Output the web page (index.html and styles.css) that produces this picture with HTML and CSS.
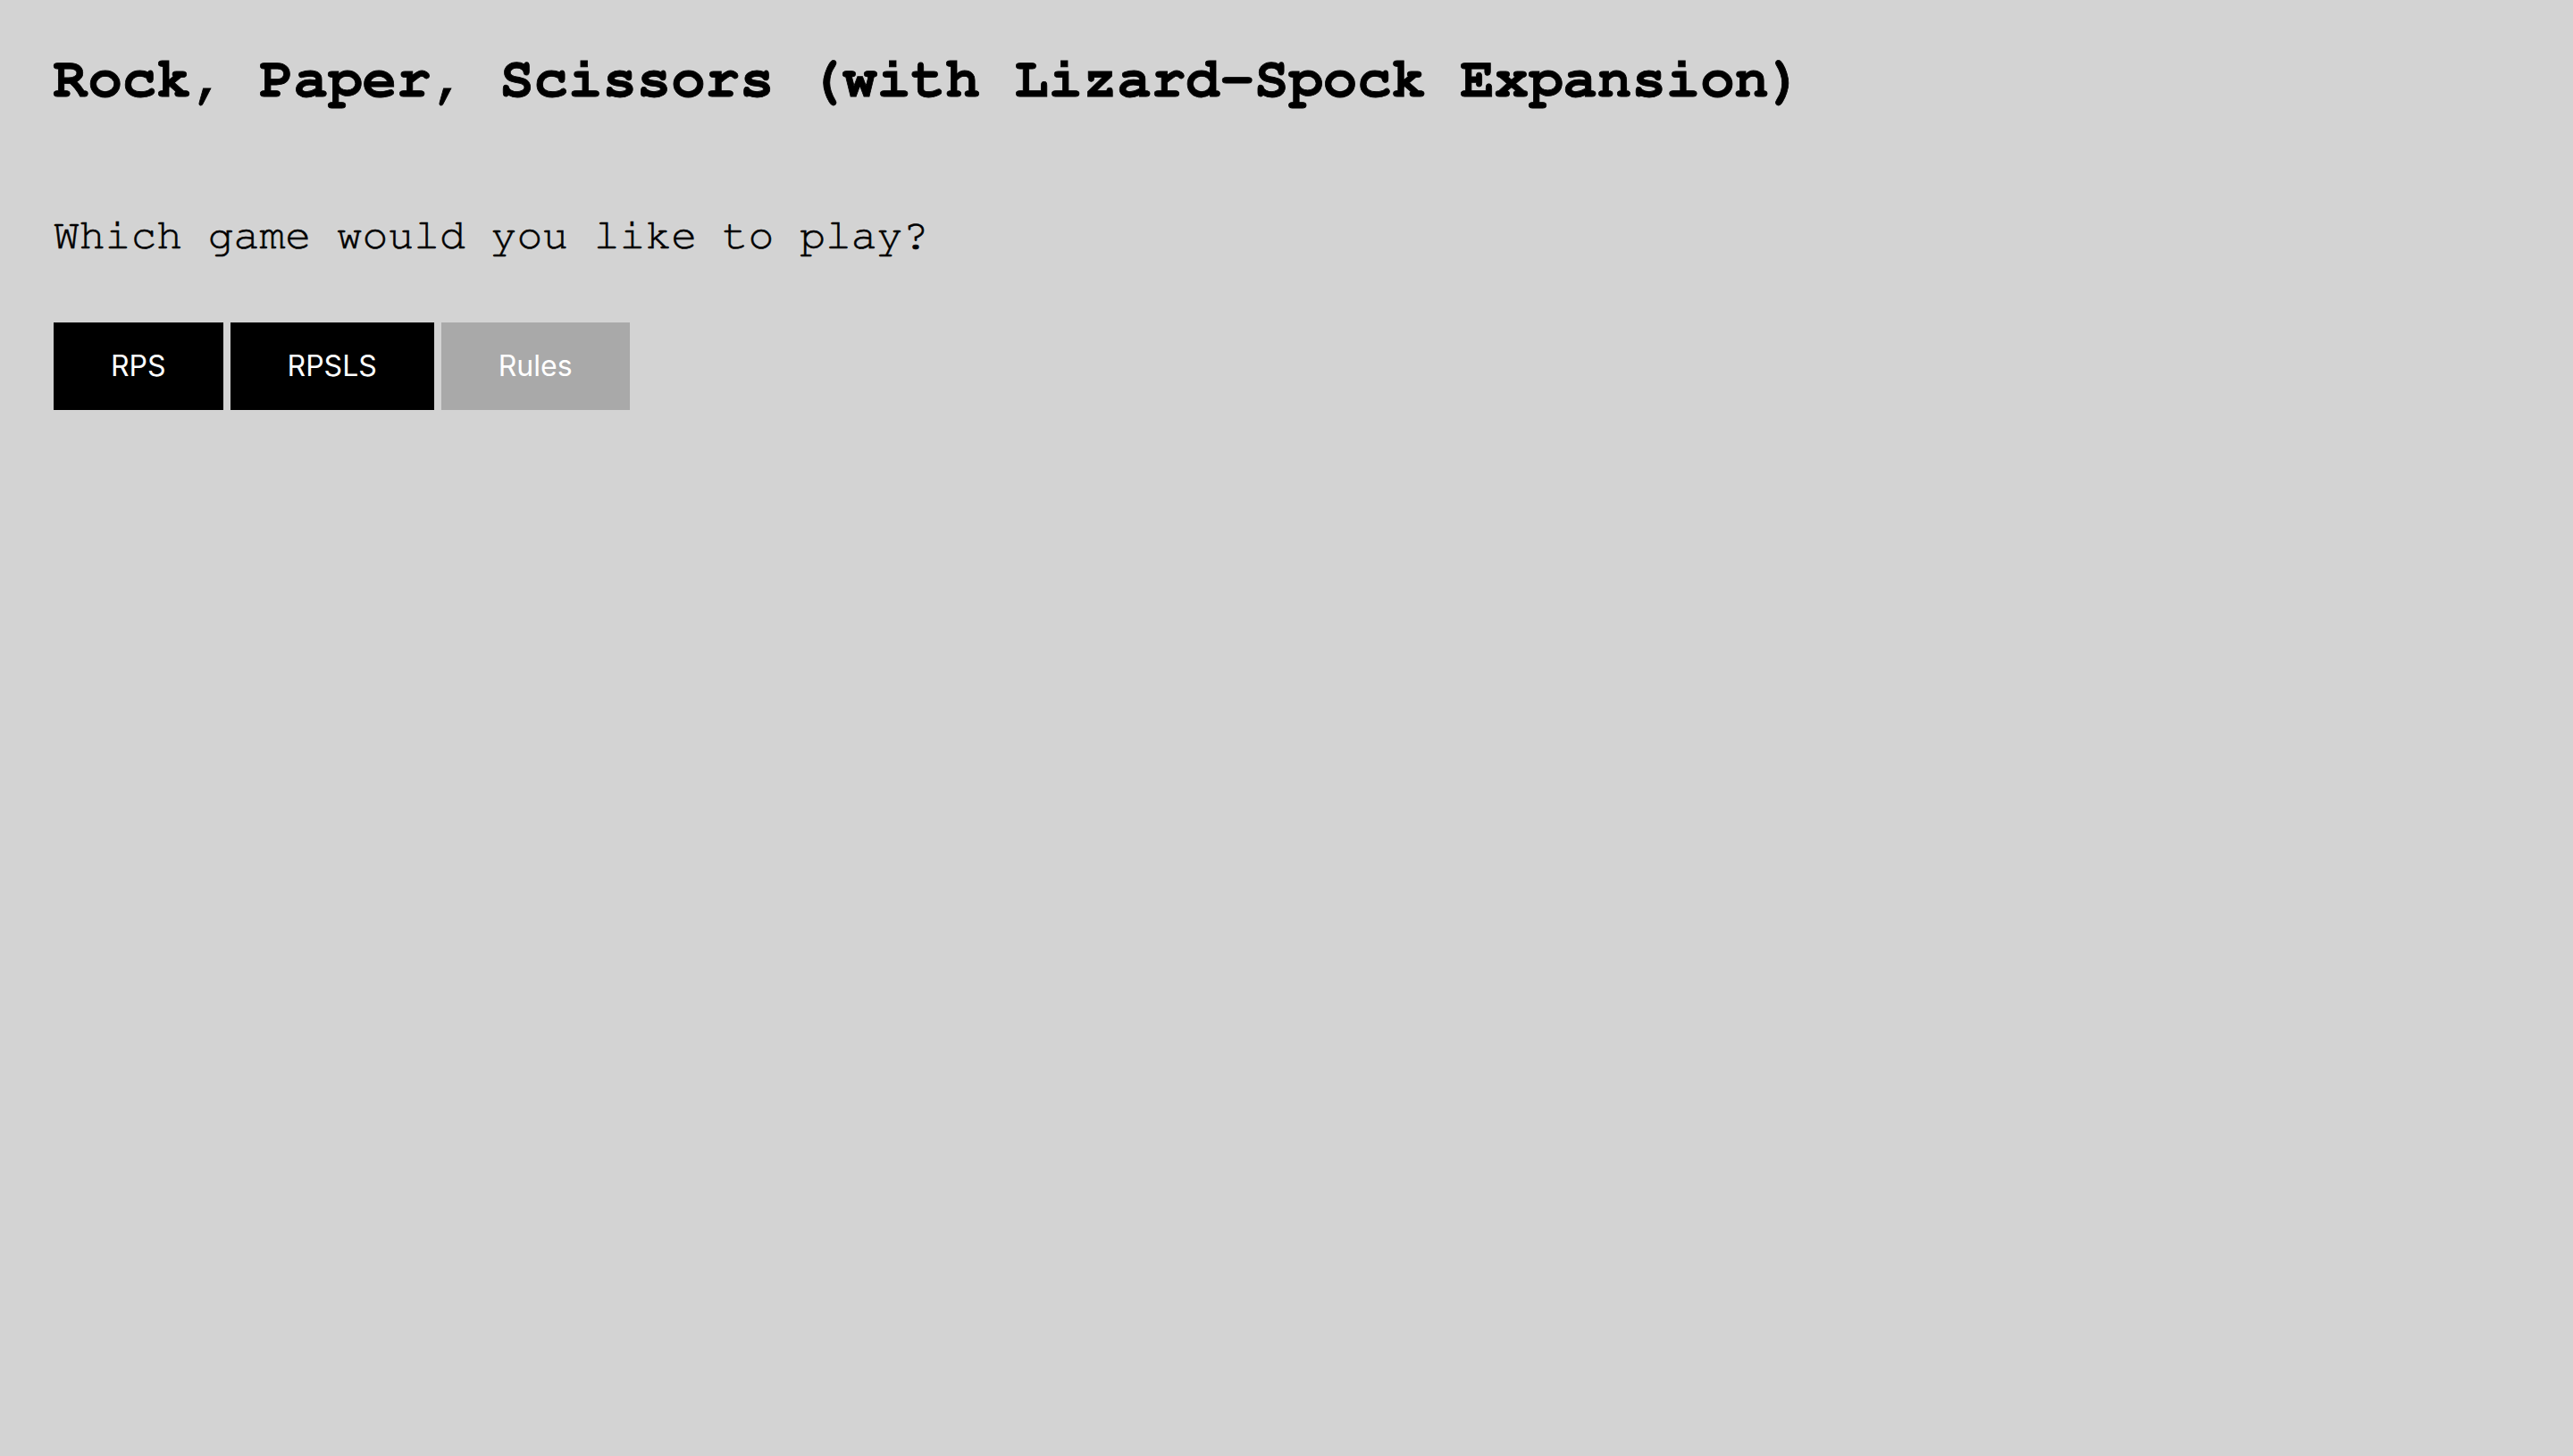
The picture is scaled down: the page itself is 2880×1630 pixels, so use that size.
FILE: index.html
```html
<!DOCTYPE html>
<html lang="en">
<head>
<meta charset="utf-8">
<title>Rock, Paper, Scissors</title>
<link rel="stylesheet" href="styles.css">
</head>
<body>
<main class="page">
  <h1 class="title">Rock, Paper, Scissors (with Lizard-Spock Expansion)</h1>
  <p class="prompt">Which game would you like to play?</p>
  <div class="buttons">
    <button class="btn btn-dark">RPS</button>
    <button class="btn btn-dark">RPSLS</button>
    <button class="btn btn-grey">Rules</button>
  </div>
</main>
</body>
</html>
```

FILE: styles.css
```css
html, body {
  margin: 0;
  padding: 0;
  background: #d3d3d3;
}
body {
  min-height: 100vh;
}
.page {
  display: flex;
  flex-direction: column;
  align-items: flex-start;
  padding: 53px 60px;
}
.title {
  margin: 0;
  font-family: "Nimbus Mono PS", "Nimbus Mono L", "FreeMono", "Courier", "Courier New", "Liberation Mono", monospace;
  font-weight: bold;
  font-size: 64px;
  line-height: 72px;
  color: #000;
  -webkit-text-stroke: 0.8px #000;
}
.prompt {
  margin: 112px 0 0 0;
  font-family: "Nimbus Mono PS", "Nimbus Mono L", "FreeMono", "Courier", "Courier New", "Liberation Mono", monospace;
  font-weight: normal;
  font-size: 48px;
  line-height: 54px;
  color: #000;
  -webkit-text-stroke: 0.6px #000;
}
.buttons {
  display: flex;
  gap: 8px;
  margin-top: 70px;
}
.btn {
  border: none;
  margin: 0;
  padding: 32px 64px;
  font-family: Inter, "Noto Sans", sans-serif;
  font-size: 32px;
  line-height: 34px;
  color: #fff;
  cursor: pointer;
}
.btn-dark {
  background: #000;
}
.btn-grey {
  background: #a9a9a9;
}
```
